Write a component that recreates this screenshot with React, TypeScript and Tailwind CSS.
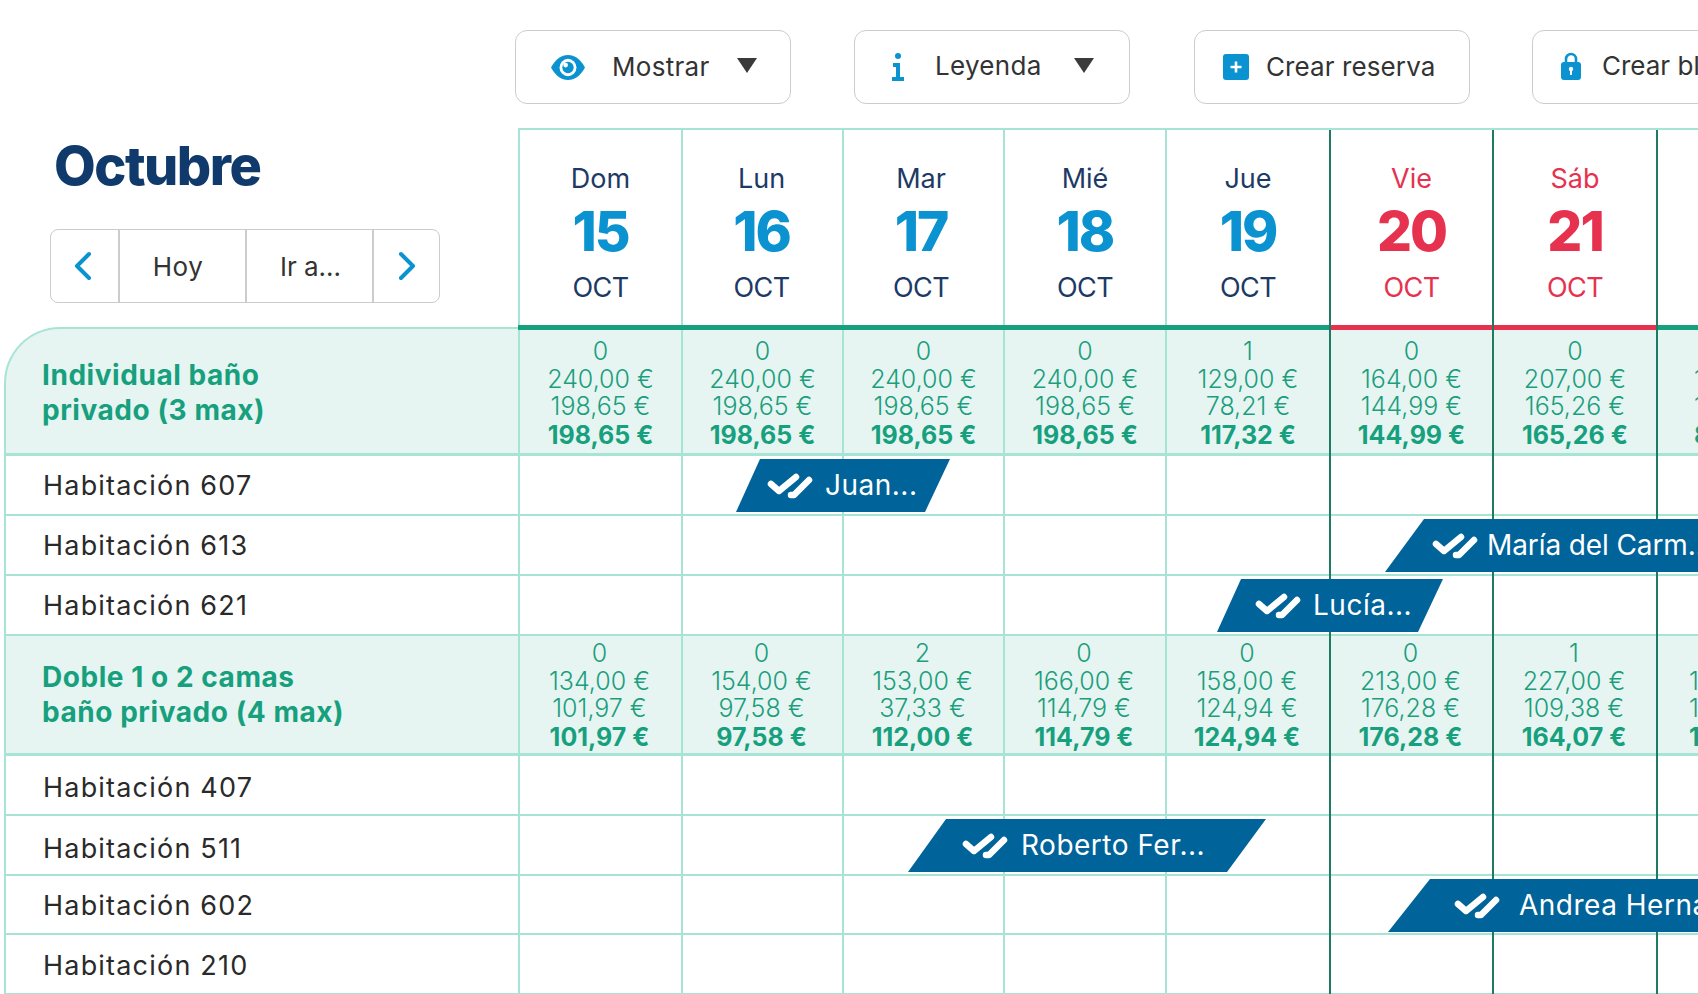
import { ReactNode } from "react";

const font = "font-['Inter','Liberation_Sans',sans-serif]";
const lineLight = "border-[#a8e4d5]";
const lineDark = "border-[#1f7a63]";

// anchos de cada columna de día
const columnas = [
  { w: "w-[163px]", oscura: false },
  { w: "w-[161px]", oscura: false },
  { w: "w-[161px]", oscura: false },
  { w: "w-[162px]", oscura: false },
  { w: "w-[164px]", oscura: false },
  { w: "w-[163px]", oscura: true },
  { w: "w-[164px]", oscura: true },
  { w: "w-[163px]", oscura: true },
];

const dias = [
  { d: "Dom", n: "15", finde: false, ajuste: "" },
  { d: "Lun", n: "16", finde: false, ajuste: "pr-[2px]" },
  { d: "Mar", n: "17", finde: false, ajuste: "pr-[5px]" },
  { d: "Mié", n: "18", finde: false, ajuste: "" },
  { d: "Jue", n: "19", finde: false, ajuste: "" },
  { d: "Vie", n: "20", finde: true, ajuste: "" },
  { d: "Sáb", n: "21", finde: true, ajuste: "" },
];

const precios1 = [
  ["0", "240,00 €", "198,65 €", "198,65 €"],
  ["0", "240,00 €", "198,65 €", "198,65 €"],
  ["0", "240,00 €", "198,65 €", "198,65 €"],
  ["0", "240,00 €", "198,65 €", "198,65 €"],
  ["1", "129,00 €", "78,21 €", "117,32 €"],
  ["0", "164,00 €", "144,99 €", "144,99 €"],
  ["0", "207,00 €", "165,26 €", "165,26 €"],
];

const precios2 = [
  ["0", "134,00 €", "101,97 €", "101,97 €"],
  ["0", "154,00 €", "97,58 €", "97,58 €"],
  ["2", "153,00 €", "37,33 €", "112,00 €"],
  ["0", "166,00 €", "114,79 €", "114,79 €"],
  ["0", "158,00 €", "124,94 €", "124,94 €"],
  ["0", "213,00 €", "176,28 €", "176,28 €"],
  ["1", "227,00 €", "109,38 €", "164,07 €"],
];

function Triangle() {
  return (
    <svg width="20" height="15" viewBox="0 0 20 15" className="shrink-0 -translate-y-[2px]">
      <path d="M0 0H20L10 15Z" fill="#3a3a3a" />
    </svg>
  );
}

function ToolButton({ className, children }: { className: string; children: ReactNode }) {
  return (
    <div className={`flex h-[74px] w-[276px] shrink-0 items-center rounded-[12px] border border-[#cccccc] bg-white text-[26px] tracking-[0.3px] text-[#333333] ${className}`}>
      {children}
    </div>
  );
}

function DoubleCheck() {
  return (
    <svg width="46" height="26" viewBox="0 0 46 26" fill="none" stroke="white" strokeWidth="6.5" strokeLinecap="round" strokeLinejoin="round" className="shrink-0">
      <path d="M4 11L12 18L29 4" />
      <path d="M24 22L27 22L42 7" />
    </svg>
  );
}

function Reserva({ className, gap, nombre }: { className: string; gap: string; nombre: string }) {
  return (
    <div className={`absolute top-[3px] z-10 flex h-[53px] items-center whitespace-nowrap bg-[#00639a] text-[28px] tracking-[0.5px] text-white ${className}`}>
      <DoubleCheck />
      <span className={`-translate-y-[1px] ${gap}`}>{nombre}</span>
    </div>
  );
}

function Habitacion({ nombre, altura = "h-[60px]", ajuste = "pt-[2px]", children }: { nombre: string; altura?: string; ajuste?: string; children?: ReactNode }) {
  return (
    <div className={`relative ml-[4px] flex ${altura} border-b-2 ${lineLight}`}>
      <div className={`flex w-[514px] shrink-0 items-center border-l-2 ${lineLight} pl-[37px] ${ajuste} text-[27px] tracking-[1.2px] text-[#2a2a2a]`}>
        {nombre}
      </div>
      {columnas.map((c, i) => (
        <div key={i} className={`${c.w} shrink-0 border-l-2 ${c.oscura ? `relative z-[1] -mb-[2px] ${lineDark}` : lineLight}`} />
      ))}
      {children}
    </div>
  );
}

function Banda({ lineas, datos, extra, altura, relleno, sangria, redondo }: { lineas: string[]; datos: string[][]; extra: string[]; altura: string; relleno: string; sangria: string; redondo?: boolean }) {
  return (
    <div className={`relative ml-[4px] flex ${altura} border-b-[3px] ${lineLight}`}>
      <div
        className={`flex w-[514px] shrink-0 flex-col justify-center border-l-2 ${lineLight} bg-[#e6f5f1] pl-[36px] text-[28px] leading-[35px] font-bold tracking-[0.55px] text-[#17a07e] ${redondo ? "-mt-[3px] rounded-tl-[56px] border-t-2 pt-[4px]" : ""}`}
      >
        {lineas.map((l) => (
          <div key={l}>{l}</div>
        ))}
      </div>
      <div className="flex flex-1 bg-[#e6f5f1]">
        {datos.map((p, i) => (
          <div
            key={i}
            className={`${columnas[i].w} flex shrink-0 flex-col items-center border-l-2 ${relleno} text-[25px] font-light text-[#1c9e7e] ${columnas[i].oscura ? `relative z-[1] -mb-[3px] ${lineDark}` : lineLight}`}
          >
            <div className="leading-[28px]">{p[0]}</div>
            <div className="leading-[29px]">{p[1]}</div>
            <div className="leading-[24px]">{p[2]}</div>
            <div className="leading-[34px] font-bold text-[#17a07e]">{p[3]}</div>
          </div>
        ))}
        <div className={`w-[163px] shrink-0 border-l-2 ${lineDark} relative z-[1] -mb-[3px] pt-[3px] ${sangria} text-[25px] font-light text-[#1c9e7e]`}>
          <div className="leading-[28px]">&nbsp;</div>
          <div className="leading-[29px] whitespace-nowrap">{extra[0]}</div>
          <div className="leading-[24px] whitespace-nowrap">{extra[1]}</div>
          <div className="leading-[34px] font-bold whitespace-nowrap text-[#17a07e]">{extra[2]}</div>
        </div>
      </div>
    </div>
  );
}

export default function App() {
  return (
    <div className={`h-[994px] w-[1698px] overflow-hidden bg-white ${font}`}>
      {/* Barra de acciones */}
      <div className="flex gap-[63px] pt-[30px] pl-[515px]">
        <ToolButton className="pl-[35px]">
          <svg width="34" height="25" viewBox="0 0 36 26" preserveAspectRatio="none" className="shrink-0">
            <path d="M0 13C5 4 11 0 18 0S31 4 36 13C31 22 25 26 18 26S5 22 0 13Z" fill="#0a93d0" />
            <circle cx="18" cy="13" r="9" fill="white" />
            <circle cx="18" cy="13" r="6" fill="#0a93d0" />
            <circle cx="15.5" cy="10.5" r="2.5" fill="white" />
          </svg>
          <span className="mr-[27px] ml-[27px] -translate-y-[1px]">Mostrar</span>
          <Triangle />
        </ToolButton>
        <ToolButton className="pl-[36px]">
          <svg width="14" height="28" viewBox="0 0 14 28" className="shrink-0">
            <circle cx="7" cy="3" r="3" fill="#0a93d0" />
            <path d="M2 10H9V24H13V28H1V24H5V14H2Z" fill="#0a93d0" />
          </svg>
          <span className="mr-[32px] ml-[30px] -translate-y-[2px]">Leyenda</span>
          <Triangle />
        </ToolButton>
        <ToolButton className="ml-[1px] pl-[28px]">
          <svg width="26" height="26" viewBox="0 0 26 26" className="shrink-0">
            <rect width="26" height="26" rx="3" fill="#0a93d0" />
            <path d="M13 7.5V18.5M7.5 13H18.5" stroke="white" strokeWidth="2.6" />
          </svg>
          <span className="ml-[17px] -translate-y-[1px] tracking-[0.1px]">Crear reserva</span>
        </ToolButton>
        <ToolButton className="-ml-[1px] pl-[28px]">
          <svg width="20" height="28" viewBox="0 0 20 28" className="shrink-0 -translate-y-[1px]">
            <path d="M5 11V7a5 5 0 0 1 10 0v4" fill="none" stroke="#0a93d0" strokeWidth="2.6" />
            <rect y="10" width="20" height="18" rx="3" fill="#0a93d0" />
            <circle cx="10" cy="17" r="2.2" fill="white" />
            <rect x="9" y="17" width="2" height="6" fill="white" />
          </svg>
          <span className="ml-[21px] -translate-y-[2px] whitespace-nowrap tracking-[0px]">Crear bloqueo</span>
        </ToolButton>
      </div>

      {/* Cabecera del calendario */}
      <div className="mt-[24px] flex">
        <div className="w-[518px] shrink-0 pl-[50px]">
          <div className="mt-[8px] ml-[4px] text-[54px] leading-[60px] font-extrabold tracking-[-1.5px] text-[#0f3a6b]">Octubre</div>
          <div className="mt-[33px] flex h-[74px] w-[390px] rounded-[8px] border border-[#cccccc] text-[26px] text-[#333333]">
            <div className="flex w-[67px] items-center justify-center pr-[3px]">
              <svg width="20" height="30" viewBox="0 0 20 30" fill="none" stroke="#0a93d0" strokeWidth="4" strokeLinecap="round" strokeLinejoin="round">
                <path d="M16 3L4 15L16 27" />
              </svg>
            </div>
            <div className="flex w-[127px] items-center justify-center border-l-2 border-[#cccccc] pr-[9px] tracking-[0.5px]">Hoy</div>
            <div className="flex w-[127px] items-center justify-center border-l-2 border-[#cccccc] pl-[2px]">Ir a...</div>
            <div className="flex flex-1 items-center justify-center border-l-2 border-[#cccccc]">
              <svg width="20" height="30" viewBox="0 0 20 30" fill="none" stroke="#0a93d0" strokeWidth="4" strokeLinecap="round" strokeLinejoin="round">
                <path d="M4 3L16 15L4 27" />
              </svg>
            </div>
          </div>
        </div>
        <div className={`flex h-[197px] flex-1 border-t-2 ${lineLight}`}>
          {dias.map((d, i) => (
            <div key={d.n} className={`${columnas[i].w} flex shrink-0 flex-col items-center border-l-2 pt-[33px] ${d.ajuste} ${columnas[i].oscura ? lineDark : lineLight}`}>
              <div className={`text-[27px] leading-[32px] ${d.finde ? "text-[#e6324f]" : "text-[#1d3a66]"}`}>{d.d}</div>
              <div className={`text-[55px] leading-[72px] font-extrabold tracking-[-2px] ${d.finde ? "text-[#e6324f]" : "text-[#0a93d0]"}`}>{d.n}</div>
              <div className={`translate-y-[2px] text-[27px] leading-[38px] tracking-[-0.6px] ${d.finde ? "text-[#e6324f]" : "text-[#1d3a66]"}`}>OCT</div>
            </div>
          ))}
          <div className={`w-[100px] shrink-0 border-l-2 ${lineDark}`} />
        </div>
      </div>

      {/* Franja de color bajo los días */}
      <div className="relative z-[2] flex h-[5px]">
        <div className="w-[518px] shrink-0" />
        <div className="w-[811px] shrink-0 bg-[#17a07e]" />
        <div className={`w-[163px] shrink-0 border-l-2 ${lineDark} bg-[#e6324f]`} />
        <div className={`w-[164px] shrink-0 border-l-2 ${lineDark} bg-[#e6324f]`} />
        <div className={`flex-1 border-l-2 ${lineDark} bg-[#17a07e]`} />
      </div>

      <Banda redondo lineas={["Individual baño", "privado (3 max)"]} datos={precios1} extra={["190,00 €", "190,00 €", "88,65 €"]} altura="h-[126px]" relleno="pt-[7px]" sangria="pt-[7px] pl-[36px]" />
      <Habitacion nombre="Habitación 607">
        <Reserva className="left-[732px] w-[214px] pl-[31px] [clip-path:polygon(24px_0,100%_0,189px_100%,0_100%)]" gap="ml-[12px]" nombre="Juan..." />
      </Habitacion>
      <Habitacion nombre="Habitación 613">
        <Reserva className="left-[1381px] w-[400px] pl-[47px] [clip-path:polygon(39px_0,100%_0,100%_100%,0_100%)]" gap="ml-[9px] tracking-[-0.1px]" nombre="María del Carm..." />
      </Habitacion>
      <Habitacion nombre="Habitación 621">
        <Reserva className="left-[1213px] w-[226px] pl-[38px] [clip-path:polygon(24px_0,100%_0,201px_100%,0_100%)]" gap="ml-[12px]" nombre="Lucía..." />
      </Habitacion>
      <Banda lineas={["Doble 1 o 2 camas", "baño privado (4 max)"]} datos={precios2} extra={["190,00 €", "134,00 €", "134,00 €"]} altura="h-[120px]" relleno="pt-[3px] pr-[2px]" sangria="pt-[3px] pl-[31px]" />
      <Habitacion nombre="Habitación 407" ajuste="pt-[6px]" />
      <Habitacion nombre="Habitación 511" ajuste="pt-[8px]">
        <Reserva className="left-[904px] w-[358px] pl-[54px] [clip-path:polygon(38px_0,100%_0,319px_100%,0_100%)]" gap="ml-[13px]" nombre="Roberto Fer..." />
      </Habitacion>
      <Habitacion nombre="Habitación 602" altura="h-[59px]" ajuste="pt-[3px]">
        <Reserva className="left-[1384px] w-[400px] pl-[66px] [clip-path:polygon(42px_0,100%_0,100%_100%,0_100%)]" gap="ml-[19px]" nombre="Andrea Hernandez" />
      </Habitacion>
      <Habitacion nombre="Habitación 210" ajuste="pt-[5px]" />
    </div>
  );
}
